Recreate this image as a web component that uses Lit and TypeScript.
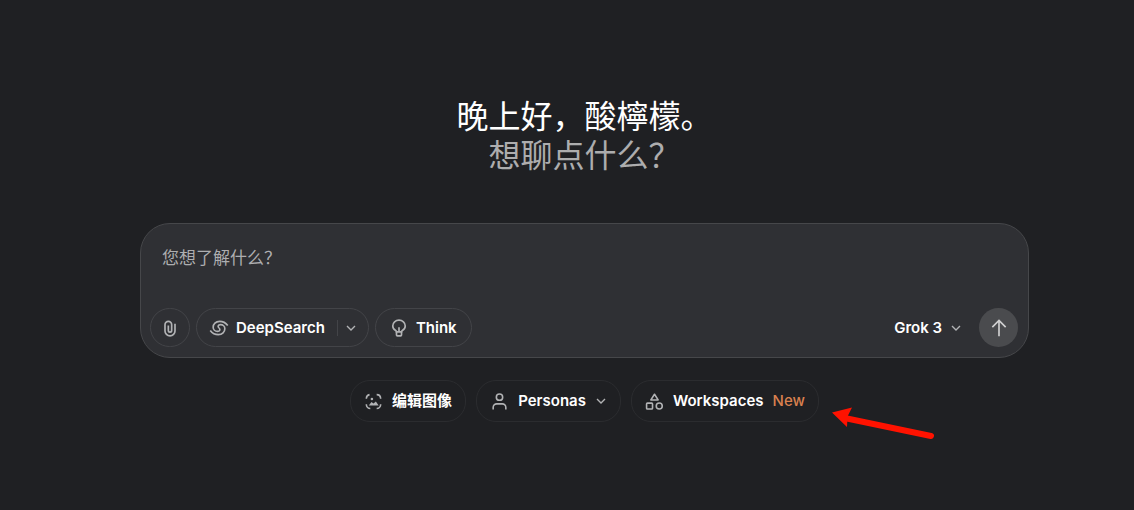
import { LitElement, html, css, svg } from "lit";
import { customElement } from "lit/decorators.js";

const icon = (body: unknown, size = 20, width = 2) => html`
  <svg class="icon" width=${size} height=${size} viewBox="0 0 24 24" fill="none" stroke="currentColor"
    stroke-width=${width} aria-hidden="true">${body}</svg>`;

const clip = svg`<path d="M10 9v6a2 2 0 0 0 4 0V8a4 4 0 0 0-8 0v7.500a6 6 0 0 0 12 0V7" stroke-linejoin="round"/>`;
const swirl = svg`
  <path d="M22.500 9C20 5.700 16.500 4 12.800 4 8 4 5 7.300 5 11c0 3 2.300 5 5.200 5 2.900 0 3.800-2.200 1.800-4"/>
  <path d="M22.500 9C20 5.700 16.500 4 12.800 4 8 4 5 7.300 5 11c0 3 2.300 5 5.200 5 2.900 0 3.800-2.200 1.800-4" transform="rotate(180 12 12)"/>`;
const bulb = svg`
  <path d="M19.500 9.500c0 2.500-1.500 4.300-3.500 5.500-.7.400-1 1-1 1.700H9c0-.7-.3-1.300-1-1.700-2-1.200-3.500-3-3.500-5.500a7.500 7 0 0 1 15 0Z"/>
  <path d="M9 16v4.500a1 1 0 0 0 1 1h4a1 1 0 0 0 1-1V16M12 16v-5"/>`;
const chevron = svg`<path d="m6 9 6 6 6-6"/>`;
const arrowUp = svg`<path d="M4 11l8-8 8 8M12 3v19"/>`;
const scene = svg`
  <path d="M3 8.500V8a5 5 0 0 1 4-4.700M16 3.300A5 5 0 0 1 21 8v.5M21 15.500v.5a5 5 0 0 1-5 4.800M8 20.800A5 5 0 0 1 3 16v-.5"/>
  <path d="M6 17l3.500-4.500 2.500 2 3-2.500 3.500 5Z" fill="currentColor" stroke="none"/>
  <circle cx="10" cy="8.800" r="1.600" fill="currentColor" stroke="none"/>`;
const person = svg`
  <circle cx="12" cy="6.500" r="4"/>
  <path d="M4 22v-2.500a4.500 4.500 0 0 1 4.500-4.500h7a4.500 4.500 0 0 1 4.500 4.500V22"/>`;
const shapes = svg`
  <path d="M12 2.800 16.600 10H7.400Z" stroke-linejoin="round"/>
  <rect x="2" y="14" width="7.500" height="7.500" rx="1"/>
  <circle cx="18" cy="17.700" r="3.800"/>`;

@customElement("app-root")
export class AppRoot extends LitElement {
  static styles = css`
    :host {
      display: block;
      box-sizing: border-box;
      min-height: 100vh;
      padding: 97px 0 32px 35px;
      overflow: hidden;
      background: #1f2023;
      color: #fff;
      font-family: Inter, "Noto Sans CJK SC", sans-serif;
      font-size: 15px;
    }
    * { box-sizing: border-box; }
    .page {
      display: flex;
      flex-direction: column;
      align-items: center;
      max-width: 889px;
      margin: 0 auto;
    }
    .greeting {
      margin: 0 0 48px;
      font-size: 32px;
      line-height: 39px;
      font-weight: 400;
      text-align: center;
    }
    .greeting span { display: block; }
    .question { color: #adadae; }
    .composer {
      display: flex;
      flex-direction: column;
      width: 100%;
      padding: 20px 10px 10px 9px;
      border: 1px solid #46474a;
      border-radius: 30px;
      background: #2f3034;
      margin-bottom: 22px;
    }
    .prompt {
      display: block;
      height: 64px;
      padding: 0 12px;
      border: 0;
      outline: 0;
      resize: none;
      background: none;
      color: #fff;
      font: inherit;
      font-size: 17px;
      line-height: 28px;
    }
    .prompt::placeholder { color: #adaeb0; opacity: 1; }
    .bar, .tools, .group, .right { display: flex; align-items: center; }
    .bar { justify-content: space-between; }
    .tools { gap: 6px; }
    button, .link {
      display: flex;
      align-items: center;
      margin: 0;
      padding: 0;
      border: 0;
      background: none;
      color: inherit;
      font: inherit;
      font-weight: 600;
      line-height: 20px;
      text-decoration: none;
      white-space: nowrap;
      cursor: pointer;
    }
    .icon { display: block; flex: none; color: #b2b3b5; }
    .pill, .group, .round {
      height: 39px;
      border: 1px solid #434448;
      border-radius: 20px;
    }
    .round { width: 40px; justify-content: center; }
    .pill { gap: 7px; padding: 0 14px 0 13px; }
    .main { gap: 7px; padding: 0 12px; }
    .more { height: 16px; padding: 0 9px 0 5px; border-left: 1px solid #434448; }
    .model { gap: 6px; }
    .right { gap: 15px; }
    .send { width: 39px; border: 0; background: #4a4b4e; }
    .send .icon { color: #d0d0d1; }
    .links { display: flex; gap: 10px; flex-wrap: wrap; justify-content: center; }
    .link {
      height: 42px;
      gap: 9px;
      padding: 0 13px;
      border: 1px solid #2b2c2f;
      border-radius: 20px;
    }
    .menu { padding-right: 11px; }
    .menu span { margin-right: -2px; }
    .new { color: #d9804f; font-weight: 500; }
    .pointer {
      position: absolute;
      left: calc(50% + 263px);
      top: 404px;
    }
  `;

  render() {
    return html`
      <main class="page">
        <h1 class="greeting"><span>晚上好，酸檸檬。</span><span class="question">想聊点什么？</span></h1>
        <form class="composer" @submit=${(e: Event) => e.preventDefault()}>
          <textarea class="prompt" aria-label="您想了解什么？" placeholder="您想了解什么？"></textarea>
          <div class="bar">
            <div class="tools">
              <button class="round" type="button" aria-label="Attach">${icon(clip, 20)}</button>
              <div class="group">
                <button class="main" type="button">${icon(swirl, 20)}DeepSearch</button>
                <button class="more" type="button" aria-label="DeepSearch options">${icon(chevron, 16)}</button>
              </div>
              <button class="pill" type="button">${icon(bulb, 20)}Think</button>
            </div>
            <div class="right">
              <button class="model" type="button">Grok 3${icon(chevron, 16)}</button>
              <button class="round send" type="submit" aria-label="Send">${icon(arrowUp, 20)}</button>
            </div>
          </div>
        </form>
        <nav class="links">
          <button class="link" type="button">${icon(scene, 19)}编辑图像</button>
          <button class="link menu" type="button">${icon(person, 19)}<span>Personas</span>${icon(chevron, 16)}</button>
          <a class="link" href="#workspaces">${icon(shapes, 19)}Workspaces<span class="new">New</span></a>
        </nav>
      </main>
      <svg class="pointer" width="108" height="38" viewBox="0 0 108 38" aria-hidden="true">
        <path d="M17 14.500 101 32" stroke="#ff1200" stroke-width="6" stroke-linecap="round"/>
        <path d="M2 8.500 22 3.500 17.500 12.500 17 23Z" fill="#ff1200"/>
      </svg>
    `;
  }
}
